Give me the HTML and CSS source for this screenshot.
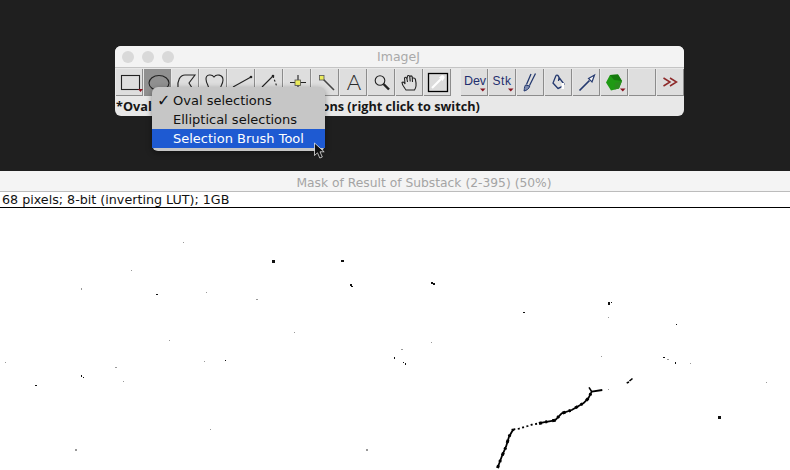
FILE: index.html
```html
<!DOCTYPE html>
<html lang="en">
<head>
    <meta charset="UTF-8">
    <meta name="viewport" content="width=device-width, initial-scale=1.0">
    <title>ImageJ</title>
    <link rel="stylesheet" href="styles.css">
</head>
<body>
    <div class="desktop">
        <div class="imagej">
            <div class="titlebar">
                <div class="lights"><span></span><span></span><span></span></div>
                <div class="app-title">ImageJ</div>
            </div>
            <div class="toolbar">
                <div class="tool"><svg viewBox="0 0 27 27"><rect class="ink" x="5.500" y="6.500" width="18" height="14"/><path class="mark" d="M22 20h5l-2.500 3z"/></svg></div>
                <div class="tool active"><svg viewBox="0 0 27 27"><ellipse class="ink" cx="15" cy="14" rx="10" ry="7.500"/></svg></div>
                <div class="tool"><svg viewBox="0 0 27 27"><path class="ink" d="M6 19C5 12 8 6 13 6L23 6L17 14L22 22"/></svg></div>
                <div class="tool"><svg viewBox="0 0 27 27"><path class="ink" d="M9 22C10 18 6 15 6 10C6 5 12 5 14 8C16 5 23 5 23 11C23 16 19 18 20 22"/></svg></div>
                <div class="tool"><svg viewBox="0 0 27 27"><path class="ink" d="M5 18L23 8"/><circle class="dot" cx="23" cy="8" r="1.300"/></svg></div>
                <div class="tool"><svg viewBox="0 0 27 27"><path class="ink" d="M6 18L17 7"/><path class="ink dotted" d="M17 7L21 18"/><circle class="dot" cx="17" cy="7" r="1.300"/></svg></div>
                <div class="tool"><svg viewBox="0 0 27 27"><path class="ink" d="M6 13.500H22M14 6V22"/><rect class="yellow" x="11" y="11" width="5.500" height="5.500"/></svg></div>
                <div class="tool"><svg viewBox="0 0 27 27"><path class="ink wide" d="M11 10L22 21"/><rect class="yellow" x="7.500" y="6.500" width="4.500" height="4.500"/></svg></div>
                <div class="tool"><svg viewBox="0 0 27 27"><text class="letter" x="14" y="21">A</text></svg></div>
                <div class="tool"><svg viewBox="0 0 27 27"><circle class="ink" cx="12" cy="11.500" r="4.800"/><path class="ink heavy" d="M15.500 15L21 20.500"/></svg></div>
                <div class="tool"><svg viewBox="0 0 27 27"><path class="ink" d="M10 21C8 18 6 16 6 13.500C7 12.500 8.500 13.500 9 15L8.500 9C9.500 7.500 10.500 8.500 11 10L11.500 7C12.500 6 13.500 6.500 13.800 8L14.500 7C15.500 6.500 16.500 7.500 16.300 9L17.500 9C19 9 19.500 10 19.500 11C20.500 15 20.500 18 18.500 21ZM11 10L11.500 13M13.800 8L14.200 12.500M16.300 9L16.500 13"/></svg></div>
                <div class="tool"><svg viewBox="0 0 27 27"><rect class="ink frame" x="4.500" y="4.500" width="19" height="18"/><path class="white-line" d="M8 19L17 10"/><path class="white-fill" d="M15 8.500L18 6C19.500 6 21 7.500 20.500 9L18.500 12Z"/></svg></div>
                <div class="tool-gap"></div>
                <div class="tool"><span class="tool-label">Dev</span><svg class="over" viewBox="0 0 27 27"><path class="mark" d="M19 19.500h5.500l-2.700 3z"/></svg></div>
                <div class="tool"><span class="tool-label spaced">Stk</span><svg class="over" viewBox="0 0 27 27"><path class="mark" d="M19 19.500h5.500l-2.700 3z"/></svg></div>
                <div class="tool"><svg viewBox="0 0 27 27"><path class="navy" d="M9.500 15.500L14 5M12.500 16.500L18.500 4.500"/><path class="navy-soft" d="M8.500 16C7 18 7.500 21 7 22C9.500 21.500 12 20 12.800 17Z"/></svg></div>
                <div class="tool"><svg viewBox="0 0 27 27"><path class="navy" d="M11 6.500L8 14L13 19.500C15 19 18 17 19 15L14 8.500M11 6.500C12 5.500 13.500 6.500 14 8.500L13.500 12"/><rect class="white-block" x="16.500" y="14" width="2.500" height="6"/></svg></div>
                <div class="tool"><svg viewBox="0 0 27 27"><path class="navy thick" d="M6.500 21.500L16.500 11.500"/><path class="navy-open" d="M15.500 9.500L21.500 6L19 13Z"/></svg></div>
                <div class="tool"><svg viewBox="0 0 27 27"><path class="cube-mid" d="M5 13.500L9 6L17 5.500L21 12L18 19.500L10 21.500Z"/><path class="cube-light" d="M9 6L17 5.500L21 12L13 11Z"/><path class="cube-dark" d="M21 12L18 19.500L13.500 20.500L14 14Z"/><path class="mark" d="M19 19.500h5.500l-2.700 3z"/></svg></div>
                <div class="tool"></div>
                <div class="tool"><svg viewBox="0 0 27 27"><path class="chevrons" d="M6.500 9L13 13L6.500 17M13 9L19.500 13L13 17"/></svg></div>
            </div>
            <div class="app-status">*Oval*, elliptical or brush selections (right click to switch)</div>

            <ul class="popup">
                <li class="checked">Oval selections</li>
                <li>Elliptical selections</li>
                <li class="selected">Selection Brush Tool</li>
            </ul>
            <svg class="cursor" viewBox="0 0 13 17"><path d="M1.500 1V13.500L4.500 10.800L6.800 16L9.300 15L7 9.800H11.200Z"/></svg>
        </div>
    </div>

    <div class="image-window">
        <div class="image-title">Mask of Result of Substack (2-395) (50%)</div>
        <div class="image-status">68 pixels; 8-bit (inverting LUT); 1GB</div>
        <svg class="mask" viewBox="0 208 790 262">
            <!-- the large crack -->
            <path class="crack" d="M497.500 468L501.700 456.700L506 446.700L509 436.700L513.300 429.300"/>
            <path class="crack lumps" d="M497.500 468L501.700 456.700L506 446.700L509 436.700L513.300 429.300"/>
            <path class="crack dashed" d="M513.300 429.300L519 428.700L523.300 427.300L527.700 426L531.700 424.700L537.300 423.700"/>
            <path class="crack" d="M539 423.500L543.300 422.300L555 420.300L561.700 413.300L571.700 410L583.300 403.300L588.300 398.300L591.700 391.700L602.300 390"/>
            <path class="crack lumps" d="M539 423.500L543.300 422.300L555 420.300L561.700 413.300L571.700 410L583.300 403.300L588.300 398.300L591.700 391.700"/>
            <path class="crack thin" d="M589 387.300L591.700 391.700M626.700 383L629 382M629.500 381L632.500 378.500"/>
            <!-- specks -->
            <g class="specks">
                <rect x="272" y="260" width="3" height="3"/>
                <rect x="341" y="260" width="3" height="2"/>
                <rect x="350" y="284" width="2" height="2"/>
                <rect x="351" y="286" width="2" height="1"/>
                <rect x="156" y="294" width="2" height="1"/>
                <rect x="394" y="357" width="1" height="2"/>
                <rect x="225" y="360" width="1" height="1"/>
                <rect x="81" y="375" width="1" height="2"/>
                <rect x="83" y="377" width="1" height="1"/>
                <rect x="35" y="385" width="2" height="1"/>
                <rect x="431" y="282" width="2" height="2"/>
                <rect x="433" y="283" width="2" height="2"/>
                <rect x="608" y="302" width="2" height="3"/>
                <rect x="611" y="302" width="1" height="1"/>
                <rect x="523" y="312" width="2" height="1"/>
                <rect x="676" y="324" width="1" height="1"/>
                <rect x="663" y="357" width="2" height="1"/>
                <rect x="675" y="362" width="1" height="2"/>
                <rect x="718" y="416" width="3" height="3"/>
                <rect x="403" y="362" width="1" height="1"/>
                <rect x="405" y="363" width="1" height="2"/>
            </g>
            <g class="specks faint">
                <rect x="183" y="242" width="1" height="1"/>
                <rect x="131" y="270" width="1" height="1"/>
                <rect x="81" y="288" width="1" height="2"/>
                <rect x="206" y="292" width="1" height="1"/>
                <rect x="256" y="299" width="2" height="1"/>
                <rect x="294" y="332" width="1" height="1"/>
                <rect x="169" y="340" width="1" height="1"/>
                <rect x="204" y="361" width="1" height="1"/>
                <rect x="115" y="367" width="2" height="1"/>
                <rect x="5" y="362" width="1" height="1"/>
                <rect x="123" y="381" width="1" height="1"/>
                <rect x="210" y="429" width="1" height="1"/>
                <rect x="75" y="449" width="2" height="2"/>
                <rect x="366" y="449" width="2" height="2"/>
                <rect x="608" y="317" width="1" height="1"/>
                <rect x="431" y="342" width="1" height="1"/>
                <rect x="401" y="349" width="2" height="1"/>
                <rect x="601" y="356" width="1" height="1"/>
                <rect x="667" y="359" width="2" height="1"/>
                <rect x="690" y="363" width="1" height="1"/>
                <rect x="766" y="382" width="1" height="1"/>
                <rect x="608" y="389" width="1" height="1"/>
            </g>
        </svg>
    </div>
</body>
</html>
```

FILE: styles.css
```css
body {
    margin: 0;
    width: 790px;
    height: 470px;
    overflow: hidden;
    background-color: #fff;
    font-family: "DejaVu Sans", sans-serif;
}

.desktop {
    height: 171px;
    padding: 46px 0 0 115px;
    box-sizing: border-box;
    background-color: #1f1f1f;
}

/* ImageJ toolbar window */
.imagej {
    position: relative;
    width: 569px;
    height: 70px;
    border-radius: 6px;
    background-color: #e8e8e8;
}

.titlebar {
    display: flex;
    align-items: center;
    height: 21px;
    padding: 0 7px;
    border-bottom: 1px solid #c4c4c4;
    border-radius: 6px 6px 0 0;
    background-color: #f3f3f3;
}

.lights {
    display: flex;
    gap: 8px;
}

.lights span {
    width: 12px;
    height: 12px;
    border-radius: 50%;
    background-color: #d9d9d9;
}

.app-title {
    flex: 1;
    padding-right: 54px;
    text-align: center;
    font-size: 12.500px;
    color: #a9a9a9;
}

.toolbar {
    display: flex;
    gap: 1px;
    height: 27px;
    padding: 1px 0 0 1px;
}

.tool {
    position: relative;
    width: 26px;
    height: 26px;
    border-right: 1px solid #8c8c8c;
    border-bottom: 1px solid #8c8c8c;
    background-color: #dedede;
    display: flex;
    align-items: center;
    justify-content: center;
}

.tool.active {
    background-color: #909090;
}

.tool-gap {
    width: 8px;
}

.tool svg {
    width: 27px;
    height: 27px;
    flex: none;
    overflow: visible;
}

.tool svg.over {
    position: absolute;
    left: 0;
    top: 0;
}

.tool-label {
    padding: 0 0 3px 2px;
    font-family: "Liberation Sans", sans-serif;
    font-size: 12.500px;
    color: #1f2f6e;
}

.tool-label.spaced {
    padding-left: 0;
    font-size: 12px;
    letter-spacing: 0.600px;
}

.app-status {
    padding: 1px 0 0 1px;
    font-family: "Open Sans", sans-serif;
    font-size: 12.700px;
    font-weight: 700;
    line-height: 18px;
    color: #161616;
    white-space: nowrap;
}

/* icon strokes */
.ink {
    fill: none;
    stroke: #222;
    stroke-width: 1.100;
}

.ink.wide {
    stroke: #444;
    stroke-width: 1.600;
}

.ink.heavy {
    stroke-width: 2.400;
}

.ink.dotted {
    stroke-dasharray: 2 2;
}

.ink.frame {
    stroke: #000;
    stroke-width: 1.300;
    fill: #dcdcdc;
}

.dot {
    fill: #222;
}

.mark {
    fill: #8a1420;
}

.yellow {
    fill: #ecec5c;
    stroke: #555;
    stroke-width: 0.800;
}

.letter {
    font-family: "Lato", sans-serif;
    font-size: 22px;
    font-weight: 300;
    text-anchor: middle;
    fill: #2a2a2a;
}

.white-line {
    fill: none;
    stroke: #fff;
    stroke-width: 2.200;
}

.white-fill {
    fill: #fff;
}

.white-block {
    fill: #fff;
}

.navy {
    fill: none;
    stroke: #24396f;
    stroke-width: 1.300;
}

.navy.thick {
    stroke-width: 1.700;
}

.navy-soft {
    fill: #7f8db0;
    stroke: #24396f;
    stroke-width: 1;
}

.navy-open {
    fill: #f6f6f6;
    stroke: #24396f;
    stroke-width: 1.200;
}

.cube-mid {
    fill: #1f9a14;
}

.cube-light {
    fill: #157a0d;
}

.cube-dark {
    fill: #2a8c1e;
}

.chevrons {
    fill: none;
    stroke: #8e2a2a;
    stroke-width: 1.500;
}

/* popup over the toolbar */
.popup {
    position: absolute;
    left: 37px;
    top: 41px;
    width: 173px;
    margin: 0;
    padding: 4px 0 3px;
    list-style: none;
    border-radius: 6px;
    background-color: #c6c6c6;
    box-shadow: 0 2px 6px rgba(0, 0, 0, 0.4);
    font-size: 13px;
    line-height: 19px;
    color: #111;
}

.popup li {
    padding-left: 21px;
}

.popup .checked {
    position: relative;
}

.popup .checked::before {
    content: "✓";
    position: absolute;
    left: 5px;
    font-size: 16px;
    font-weight: 700;
}

.popup .selected {
    background-color: #1e5ad2;
    color: #fff;
}

.cursor {
    position: absolute;
    left: 198px;
    top: 96px;
    width: 13px;
    height: 17px;
    fill: #111;
    stroke: #fff;
    stroke-width: 0.700;
}

/* image window */
.image-title {
    height: 20px;
    padding-left: 58px;
    border-bottom: 1px solid #bcbcbc;
    background-color: #f4f4f4;
    text-align: center;
    font-size: 12.300px;
    line-height: 24px;
    color: #a4a4a4;
}

.image-status {
    height: 15px;
    padding-left: 2px;
    border-bottom: 1px solid #000;
    font-size: 12.700px;
    line-height: 16px;
    color: #111;
    white-space: nowrap;
}

.mask {
    display: block;
    width: 790px;
    height: 262px;
}

.crack {
    fill: none;
    stroke: #000;
    stroke-width: 1.800;
    stroke-linejoin: round;
}

.crack.lumps {
    stroke-width: 3;
    stroke-dasharray: 3 3.500 2 5;
}

.crack.dashed {
    stroke-width: 1.800;
    stroke-dasharray: 2 2.500;
}

.crack.thin {
    stroke-width: 1.600;
}

.specks {
    fill: #111;
}

.specks.faint {
    fill: #999;
}
```
